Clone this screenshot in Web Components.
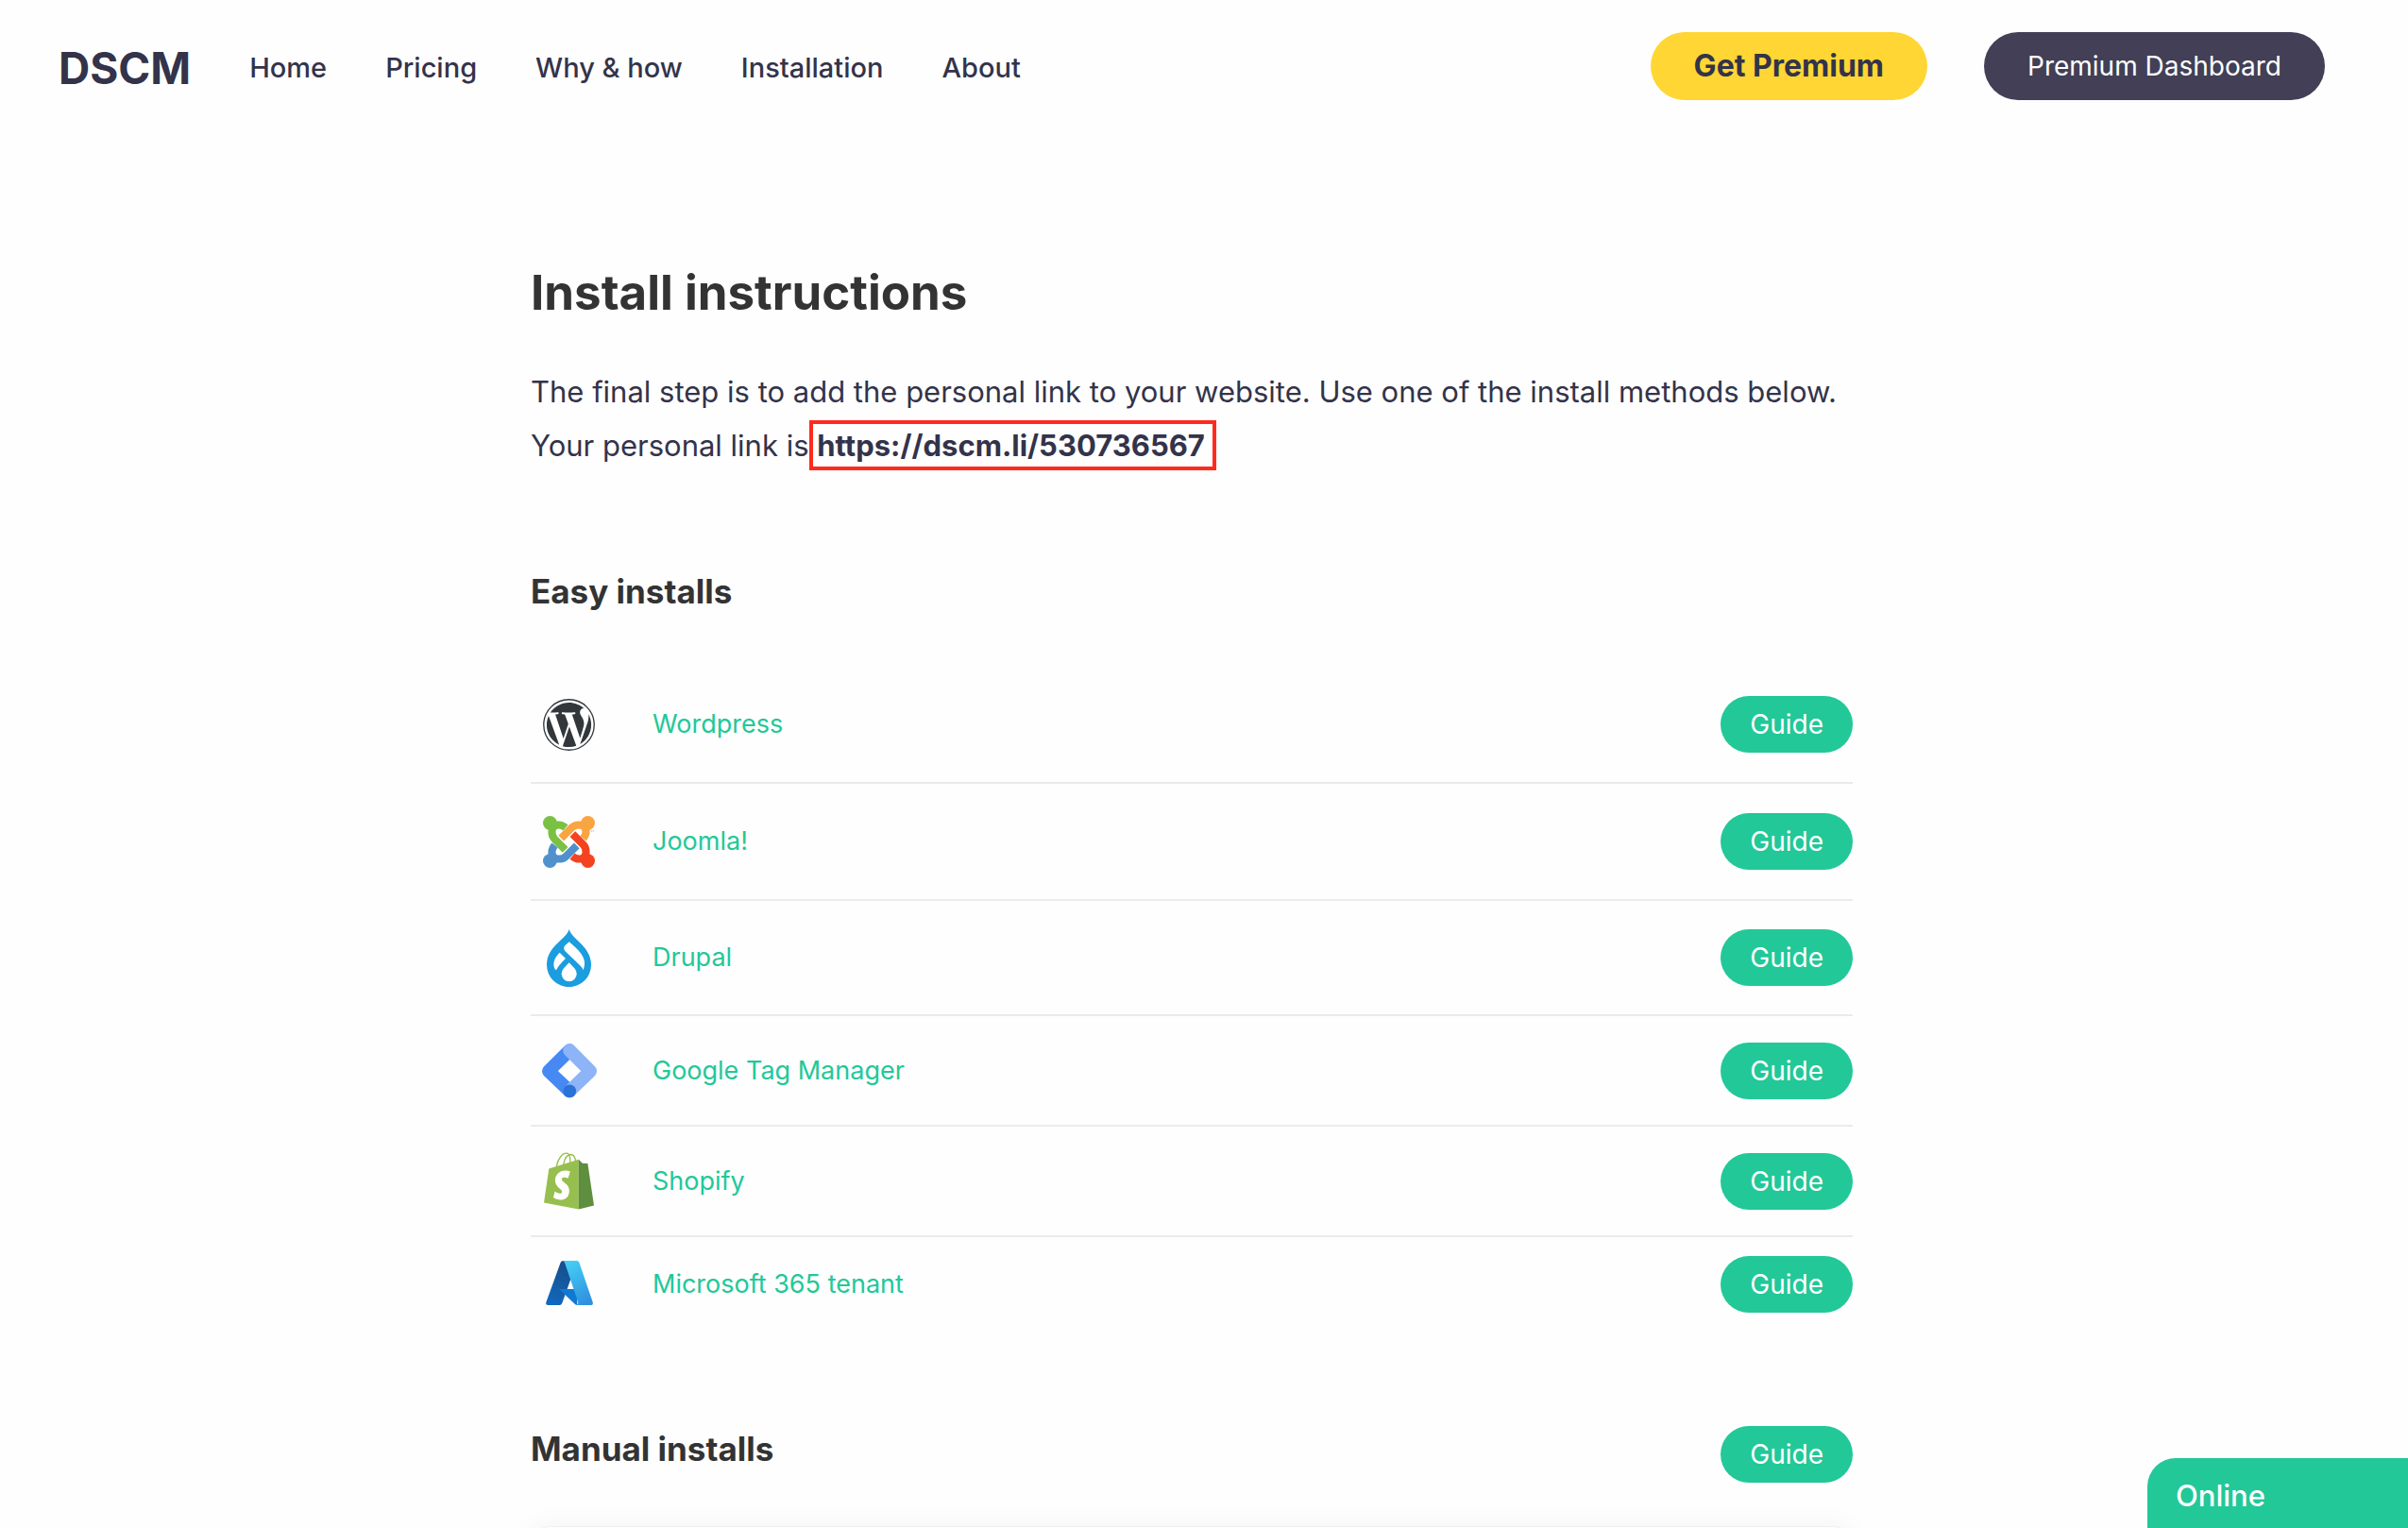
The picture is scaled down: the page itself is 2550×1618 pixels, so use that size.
<!DOCTYPE html>
<html lang="en">
<head>
<meta charset="utf-8">
<title>DSCM - Install instructions</title>
<style>
  html { background: #fefefe; }
  body {
    margin: 0;
    padding-right: 26px;
    font-family: Inter, "Liberation Sans", sans-serif;
    color: #33334a;
    --green: #22c898;
    --ink: #33334a;
    --heading: #333333;
    --line: #ebebeb;
  }
</style>
</head>
<body>
<site-header>
  <nav-link href="#home">Home</nav-link>
  <nav-link href="#pricing">Pricing</nav-link>
  <nav-link href="#why">Why &amp; how</nav-link>
  <nav-link href="#installation">Installation</nav-link>
  <nav-link href="#about">About</nav-link>
  <pill-button slot="actions" kind="premium">Get Premium</pill-button>
  <pill-button slot="actions" kind="dashboard">Premium Dashboard</pill-button>
</site-header>
<install-page></install-page>
<chat-tab>Online</chat-tab>

<script>
function define(name, html, setup) {
  const template = document.createElement('template');
  template.innerHTML = html;
  customElements.define(name, class extends HTMLElement {
    connectedCallback() {
      if (this.shadowRoot) return;
      this.attachShadow({ mode: 'open' }).append(template.content.cloneNode(true));
      if (setup) setup(this, this.shadowRoot);
    }
  });
}

define('site-header', `
  <style>
    :host { display: block; }
    header { display: flex; align-items: center; justify-content: space-between; height: 140px; padding: 0 62px; }
    .left, nav, .actions { display: flex; align-items: center; gap: 60px; }
    .left, nav { gap: 62px; }
    .left { padding-top: 3px; }
    .logo { font-size: 46px; font-weight: 700; line-height: 60px; color: var(--ink); text-decoration: none; }
  </style>
  <header>
    <div class="left"><a class="logo" href="#">DSCM</a><nav><slot></slot></nav></div>
    <div class="actions"><slot name="actions"></slot></div>
  </header>`);

define('nav-link', `
  <style>
    :host { display: block; }
    a { color: var(--ink); text-decoration: none; font-size: 29px; font-weight: 500; line-height: 40px; }
  </style>
  <a><slot></slot></a>`, (el, root) => { root.querySelector('a').href = el.getAttribute('href'); });

define('pill-button', `
  <style>
    :host { display: block; flex: none; }
    button { display: block; border: 0; border-radius: 36px; font: 400 28px/60px Inter, "Liberation Sans", sans-serif;
      color: #fff; background: var(--green); height: 60px; padding: 0 31px; cursor: pointer; }
    :host([kind="premium"]) button { background: #ffd633; color: var(--ink); height: 72px; line-height: 72px; font-size: 32px; font-weight: 700; padding: 0 46px; }
    :host([kind="dashboard"]) button { background: #423f56; height: 72px; line-height: 72px; font-size: 28px; font-weight: 400; padding: 0 46px; }
  </style>
  <button type="button"><slot></slot></button>`);

const icons = {
  wordpress: `<svg width="55" height="55" viewBox="8 8 496 496" fill="#32373c"><circle cx="256" cy="256" r="241" fill="#fff" stroke="#32373c" stroke-width="12"/><path d="M61.7 169.4l101.5 278C92.2 413 43.3 340.2 43.3 256c0-30.9 6.6-60.1 18.4-86.6zm337.9 75.9c0-26.3-9.4-44.5-17.5-58.7-10.8-17.5-20.9-32.4-20.9-49.9 0-19.6 14.8-37.8 35.7-37.8.9 0 1.8.1 2.8.2-37.9-34.7-88.3-55.9-143.7-55.9-74.3 0-139.7 38.1-177.8 95.9 5 .2 9.7.3 13.7.3 22.2 0 56.7-2.7 56.7-2.7 11.5-.7 12.8 16.2 1.4 17.5 0 0-11.5 1.3-24.3 2l77.5 230.4L249.8 247l-33.1-90.8c-11.5-.7-22.3-2-22.3-2-11.5-.7-10.1-18.2 1.3-17.5 0 0 35.1 2.7 56 2.7 22.2 0 56.7-2.7 56.7-2.7 11.5-.7 12.8 16.2 1.4 17.5 0 0-11.5 1.3-24.3 2l76.9 228.7 21.2-70.9c9-29.4 16-50.5 16-68.7zm-139.9 29.3l-63.8 185.5c19.1 5.6 39.2 8.7 60.1 8.7 24.8 0 48.5-4.3 70.6-12.1-.6-.9-1.1-1.9-1.5-2.9l-65.4-179.2zm183-120.7c.9 6.8 1.4 14 1.4 21.9 0 21.6-4 45.8-16.2 76.2l-65 187.9C426.2 403 468.7 334.5 468.7 256c0-37-9.4-71.8-26-102.1z"/></svg>`,
  joomla: `<svg width="55" height="55" viewBox="0 0 163 163"><defs><g id="arm"><path d="M71 37Q60 28 50 28C36 28 28 36 28 50Q28 64 36 72L70 106" fill="none" stroke="currentColor" stroke-width="24"/><circle cx="22" cy="22" r="22" fill="currentColor"/><path d="M16 42L42 16L48 32L32 48Z" fill="currentColor"/></g></defs><use href="#arm" color="#7ac143"/><use href="#arm" color="#f9a541" transform="rotate(90 81.5 81.5)"/><use href="#arm" color="#f44321" transform="rotate(180 81.5 81.5)"/><use href="#arm" color="#5091cd" transform="rotate(270 81.5 81.5)"/><path d="M150 47h4M156 47h4" stroke="#888" stroke-width="2"/></svg>`,
  drupal: `<svg width="47" height="61" viewBox="0 0 141 183"><path fill="#1b9ddf" d="M71 0C80 32 141 54 141 113A70.5 70.5 0 0 1 0 113C0 54 62 32 71 0Z"/><g fill="#fff"><path d="M71 40C98 64 122 84 120 112Q119 122 116 130Q113 121 104 113L60 71Q50 61 58 52Z"/><path d="M41 74L60 93Q36 116 32 127Q29 132 26 127C17 110 24 91 41 74Z"/><path d="M71 106L88 124Q95 132 95 142A24 24 0 0 1 47 142Q47 132 54 124Z"/></g></svg>`,
  gtm: `<svg width="58" height="58" viewBox="0 0 175 173" fill="none" stroke-width="42" stroke-linejoin="round" stroke-linecap="round"><path stroke="#4688f4" d="M88 21L21 87L88 151"/><path stroke="#8db4f7" d="M88 21L154 87L88 151"/><circle cx="88" cy="151" r="21" fill="#2a71da"/></svg>`,
  shopify: `<svg width="53" height="61" viewBox="0 0 160 181"><g fill="none" stroke="#95bf47" stroke-width="4"><path d="M40 46C44 20 58 2 72 2C84 2 85 22 84 36"/><path d="M62 40C66 18 76 6 86 6Q98 6 102 28"/></g><path fill="#97bf4f" d="M16 51L111 22V181L0 160Z"/><path fill="#5e8e3e" d="M111 22L123 34L140 35L160 169L111 181Z"/><path fill="#fff" d="M84 60L77 82C70 78 57 77 57 85C57 95 81 98 81 122C81 142 68 151 52 151Q38 150 30 143L35 124C44 132 58 133 58 125C58 115 36 112 36 89C36 70 50 57 68 57Q78 57 84 60Z"/></svg>`,
  azure: `<svg width="50" height="50" viewBox="0 0 150 150"><defs><linearGradient id="a" x1=".7" y1="0" x2=".3" y2="1"><stop stop-color="#194b87"/><stop offset="1" stop-color="#1068bd"/></linearGradient><linearGradient id="b" x1=".3" y1="0" x2=".7" y2="1"><stop stop-color="#45cdf5"/><stop offset="1" stop-color="#2e90de"/></linearGradient></defs><path fill="url(#a)" d="M47 5Q49 0 56 0H100L52 134Q50 141 43 141H7Q-2 140 1 132Z"/><path fill="#1178d4" d="M42 90H100V141Q96 141 92 137Z"/><path fill="url(#b)" d="M54 0H98Q104 0 106 5L149 131Q152 141 143 141H97Q105 139 102 130L60 6Q58 1 54 0Z"/></svg>`
};

define('install-row', `
  <style>
    :host { display: flex; align-items: center; border-bottom: 2px solid var(--line); box-sizing: border-box; height: 124px; }
    :host([size="compact"]) { height: 122px; }
    :host([size="medium"]) { height: 117px; }
    :host([size="small"]) { height: 100px; }
    :host(:last-of-type) { border-bottom: 0; }
    .icon { width: 81px; flex: none; display: flex; justify-content: center; }
    svg { display: block; }
    .name { flex: 1; padding-left: 48px; }
    a { color: var(--green); text-decoration: none; font-size: 27px; line-height: 40px; }
  </style>
  <div class="icon"></div>
  <div class="name"><a href="#guide"><slot></slot></a></div>
  <pill-button>Guide</pill-button>`, (el, root) => { root.querySelector('.icon').innerHTML = icons[el.getAttribute('icon')]; });

define('personal-link', `
  <style>
    :host { display: inline-block; }
    a { display: block; box-sizing: border-box; height: 53px; border: 4px solid #ff2a1c; padding: 0 8px 0 4px; margin-left: -8px;
      font-size: 31px; font-weight: 700; line-height: 45px; color: var(--ink); text-decoration: none; }
  </style>
  <a href="#link"><slot></slot></a>`);

define('install-page', `
  <style>
    :host { display: block; }
    main { max-width: 1400px; margin: 0 auto; padding-top: 134px; }
    h1, h2, p { margin: 0; }
    h1 { font-size: 51px; font-weight: 700; line-height: 72px; color: var(--heading); }
    p { margin-top: 40px; font-size: 31px; line-height: 57px; }
    h2 { font-size: 35px; font-weight: 700; line-height: 48px; color: var(--heading); }
    .easy { margin-top: 102px; }
    .rows { margin-top: 56px; }
    .manual { display: flex; align-items: flex-start; justify-content: space-between; margin-top: 100px; }
    .card { height: 200px; margin-top: 46px; border-radius: 20px; border: 1px solid #f0f0f0; background: #fefefe; box-shadow: 0 0 30px rgba(0,0,0,.05); }
  </style>
  <main>
    <h1>Install instructions</h1>
    <p>The final step is to add the personal link to your website. Use one of the install methods below.<br>Your personal link is <personal-link>https://dscm.li/530736567</personal-link></p>
    <h2 class="easy">Easy installs</h2>
    <div class="rows">
      <install-row icon="wordpress">Wordpress</install-row>
      <install-row icon="joomla">Joomla!</install-row>
      <install-row icon="drupal" size="compact">Drupal</install-row>
      <install-row icon="gtm" size="medium">Google Tag Manager</install-row>
      <install-row icon="shopify" size="medium">Shopify</install-row>
      <install-row icon="azure" size="small">Microsoft 365 tenant</install-row>
    </div>
    <div class="manual"><h2>Manual installs</h2><pill-button>Guide</pill-button></div>
    <section class="card"></section>
  </main>`);

define('chat-tab', `
  <style>
    :host { position: fixed; right: 0; bottom: 0; display: block; }
    button { display: block; width: 276px; height: 74px; border: 0; border-radius: 30px 0 0 0; padding: 6px 30px 0; text-align: left;
      background: var(--green); color: #fff; font: 500 31px/40px Inter, "Liberation Sans", sans-serif; cursor: pointer; }
  </style>
  <button type="button"><slot></slot></button>`);
</script>
</body>
</html>
